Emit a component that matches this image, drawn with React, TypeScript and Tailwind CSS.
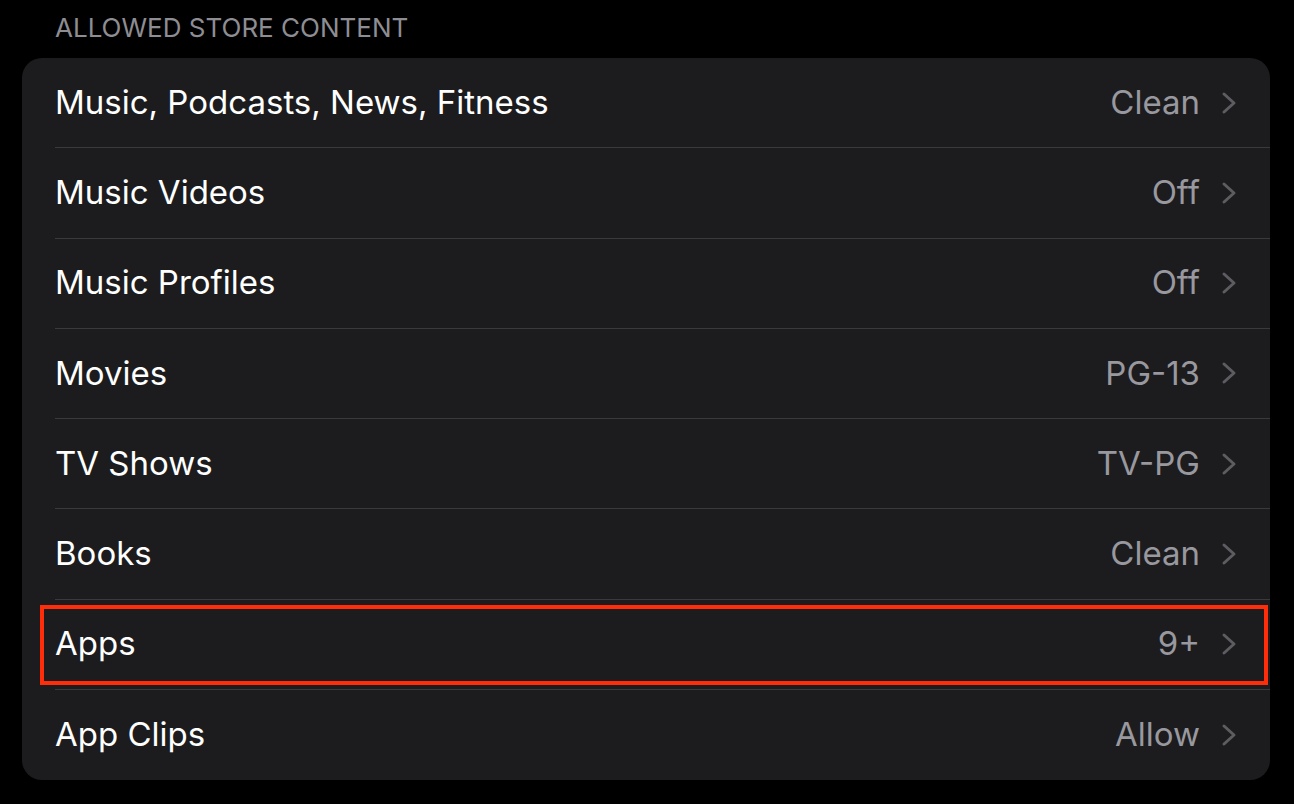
import React from 'react';

const rows = [
  { label: 'Music, Podcasts, News, Fitness', value: 'Clean' },
  { label: 'Music Videos', value: 'Off' },
  { label: 'Music Profiles', value: 'Off' },
  { label: 'Movies', value: 'PG-13' },
  { label: 'TV Shows', value: 'TV-PG' },
  { label: 'Books', value: 'Clean' },
  { label: 'Apps', value: '9+', highlight: true },
  { label: 'App Clips', value: 'Allow' },
];

const Chevron = () => (
  <svg width="16" height="24" viewBox="0 0 16 24" className="ml-[21px]">
    <path d="M3 3 L13 12 L3 21" fill="none" stroke="#5c5c61" strokeWidth="3" strokeLinecap="round" strokeLinejoin="round" />
  </svg>
);

export default function App() {
  return (
    <div className="w-[1294px] h-[804px] bg-black overflow-hidden" style={{ fontFamily: 'Inter, "Noto Sans", sans-serif' }}>
      <div className="px-[22px]">
        <div className="h-[58px] pl-[33px] pt-[13px] text-[26px] leading-[30px] text-[#8d8d93]">
          ALLOWED STORE CONTENT
        </div>
        <div className="bg-[#1c1c1e] rounded-[20px] w-[1248px]">
          {rows.map((r, i) => (
            <div key={i} className="relative pl-[33px] h-[90.25px]">
              <div className={`h-full flex items-center pr-[33px] ${i < rows.length - 1 ? 'border-b border-[#3a3a3c]' : ''}`}>
                <span className="flex-1 text-white text-[33px]">{r.label}</span>
                <span className="text-[#98989e] text-[33px]">{r.value}</span>
                <Chevron />
              </div>
              {r.highlight && (
                <div className="absolute left-[18px] right-[2px] top-[5px] bottom-[5px] border-[4px] border-[#ff2d0a]" />
              )}
            </div>
          ))}
        </div>
      </div>
    </div>
  );
}
